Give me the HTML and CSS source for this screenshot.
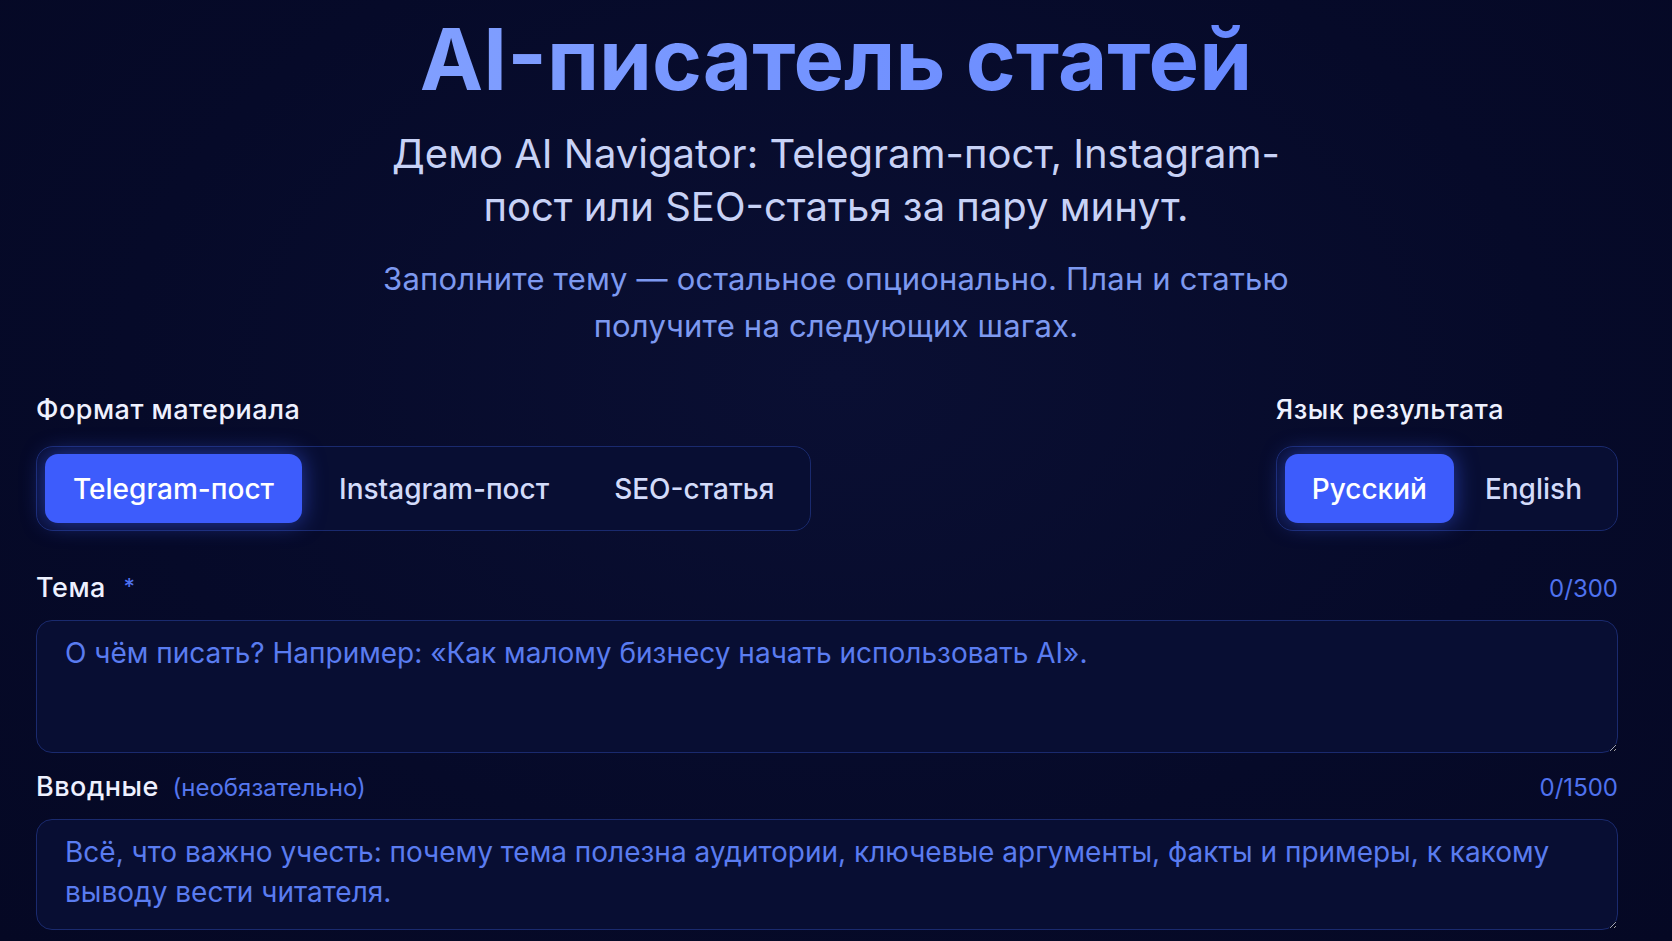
FILE: index.html
```html
<!DOCTYPE html>
<html lang="ru">
<head>
<meta charset="utf-8">
<title>AI-писатель статей</title>
<link rel="stylesheet" href="styles.css">
</head>
<body>
<header class="hero">
  <h1 class="title">AI-писатель статей</h1>
  <p class="subtitle">Демо AI Navigator: Telegram-пост, Instagram-<br>пост или SEO-статья за пару минут.</p>
  <p class="lead">Заполните тему — остальное опционально. План и статью<br>получите на следующих шагах.</p>
</header>
<main class="form">
  <div class="options">
    <div class="group">
      <div class="label">Формат материала</div>
      <div class="segmented segmented-format">
        <button class="seg active" type="button">Telegram-пост</button>
        <button class="seg" type="button">Instagram-пост</button>
        <button class="seg" type="button">SEO-статья</button>
      </div>
    </div>
    <div class="group">
      <div class="label">Язык результата</div>
      <div class="segmented segmented-lang">
        <button class="seg active" type="button">Русский</button>
        <button class="seg" type="button">English</button>
      </div>
    </div>
  </div>

  <div class="field field-topic">
    <div class="field-head">
      <div class="label">Тема <span class="req">*</span></div>
      <div class="counter">0/300</div>
    </div>
    <textarea class="input input-topic" placeholder="О чём писать? Например: «Как малому бизнесу начать использовать AI»."></textarea>
  </div>

  <div class="field field-intro">
    <div class="field-head">
      <div class="label">Вводные <span class="opt">(необязательно)</span></div>
      <div class="counter">0/1500</div>
    </div>
    <textarea class="input input-intro" placeholder="Всё, что важно учесть: почему тема полезна аудитории, ключевые аргументы, факты и примеры, к какому выводу вести читателя."></textarea>
  </div>
</main>
</body>
</html>
```

FILE: styles.css
```css
* { box-sizing: border-box; }

html, body {
  margin: 0;
  padding: 0;
  height: 100%;
}

body {
  background: radial-gradient(ellipse at 50% 40%, #0a0f33 0%, #060a29 60%, #050824 100%);
  color: #e9edff;
  font-family: Inter, "Noto Sans", "DejaVu Sans", sans-serif;
  overflow: hidden;
  color-scheme: dark;
}

.hero {
  text-align: center;
  padding-top: 16px;
}

.title {
  margin: 0;
  font-size: 85px;
  line-height: 88px;
  font-weight: 700;
  letter-spacing: 0;
  background: linear-gradient(90deg, #8eabff 0%, #7393ff 50%, #5b7dff 100%);
  -webkit-background-clip: text;
  background-clip: text;
  color: transparent;
}

.subtitle {
  margin: 23px 0 0;
  font-size: 40px;
  line-height: 53px;
  font-weight: 400;
  color: #c8d2f6;
}

.lead {
  margin: 22px 0 0;
  font-size: 31px;
  line-height: 47px;
  font-weight: 400;
  letter-spacing: 0.2px;
  color: #7d99f0;
}

.form {
  margin: 46px 54px 0 36px;
}

.options {
  display: flex;
  justify-content: space-between;
  align-items: flex-start;
}

.label {
  font-size: 27px;
  line-height: 30px;
  font-weight: 500;
  letter-spacing: 0.5px;
  color: #eef1ff;
}

.segmented {
  margin-top: 21px;
  display: flex;
  padding: 7px 8px;
  border: 1px solid #1a2a6e;
  border-radius: 17px;
  background: #080e33;
}

.segmented-format { gap: 9px; }
.segmented-format .seg { padding: 0 28px; }

.segmented-lang { gap: 4px; }
.segmented-lang .seg { padding: 0 27px; }

.seg {
  height: 69px;
  border: 0;
  border-radius: 13px;
  background: transparent;
  color: #d3dbfa;
  font-family: inherit;
  font-size: 28px;
  font-weight: 500;
  cursor: pointer;
}

.seg.active {
  background: #3d5cfc;
  color: #ffffff;
  box-shadow: 0 0 22px rgba(61, 92, 252, 0.55);
}

.field-topic { margin-top: 40px; }
.field-intro { margin-top: 19px; }

.field-head {
  display: flex;
  justify-content: space-between;
  align-items: baseline;
}

.req {
  color: #4f72ee;
  font-size: 22px;
  margin-left: 10px;
  vertical-align: 3px;
}

.opt {
  color: #5577ee;
  font-size: 24px;
  font-weight: 400;
  letter-spacing: 0;
  margin-left: 6px;
}

.counter {
  font-size: 24px;
  color: #4f72ee;
}

.input {
  display: block;
  width: 100%;
  margin-top: 17px;
  padding: 12px 28px;
  border: 1px solid #1a2a6e;
  border-radius: 16px;
  background: #080e33;
  color: #e9edff;
  font-family: inherit;
  font-size: 28px;
  line-height: 40px;
  resize: vertical;
  outline: none;
}

.input::placeholder {
  color: #5a7cf0;
  opacity: 1;
}

.input-topic { height: 133px; }
.input-intro { height: 111px; margin-top: 16px; }
```
